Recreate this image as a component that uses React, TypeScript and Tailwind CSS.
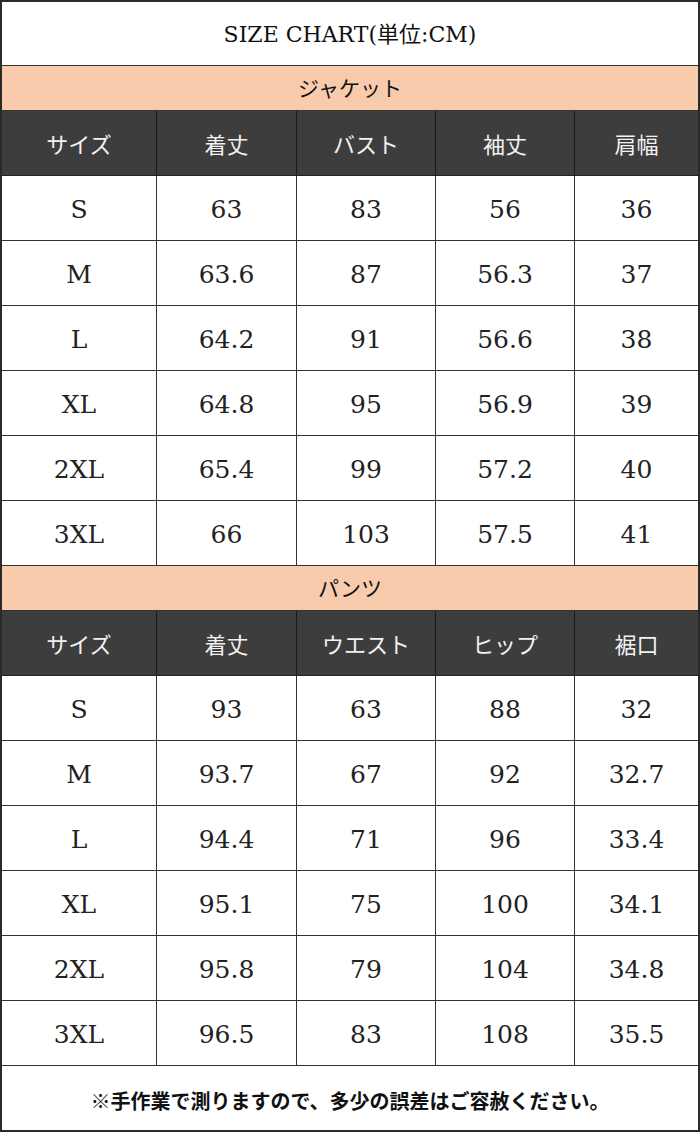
import React from "react";

// --- Size data ---
const jacketHead = ["サイズ", "着丈", "バスト", "袖丈", "肩幅"];
const jacketRows = [
  ["S", "63", "83", "56", "36"],
  ["M", "63.6", "87", "56.3", "37"],
  ["L", "64.2", "91", "56.6", "38"],
  ["XL", "64.8", "95", "56.9", "39"],
  ["2XL", "65.4", "99", "57.2", "40"],
  ["3XL", "66", "103", "57.5", "41"],
];

const pantsHead = ["サイズ", "着丈", "ウエスト", "ヒップ", "裾口"];
const pantsRows = [
  ["S", "93", "63", "88", "32"],
  ["M", "93.7", "67", "92", "32.7"],
  ["L", "94.4", "71", "96", "33.4"],
  ["XL", "95.1", "75", "100", "34.1"],
  ["2XL", "95.8", "79", "104", "34.8"],
  ["3XL", "96.5", "83", "108", "35.5"],
];

const cols = "grid grid-cols-[154px_140px_139px_139px_1fr]";
const jp = "font-['Noto_Sans_CJK_JP',sans-serif]";
const serif = "font-['DejaVu_Serif','Noto_Sans_CJK_JP',serif]";

const HeadRow: React.FC<{ cells: string[] }> = ({ cells }) => (
  <div className={`${cols} h-[65px] bg-[#3d3d3d] border-b border-[#222]`}>
    {cells.map((c, i) => (
      <div
        key={i}
        className={`flex items-center justify-center text-[22px] text-[#f2f2f2] ${jp} ${
          i > 0 ? "border-l border-[#1a1a1a]" : ""
        }`}
      >
        {c}
      </div>
    ))}
  </div>
);

const DataRow: React.FC<{ cells: string[] }> = ({ cells }) => (
  <div className={`${cols} h-[65px] bg-white border-b border-[#333]`}>
    {cells.map((c, i) => (
      <div
        key={i}
        className={`flex items-center justify-center pt-[4px] text-[25px] text-[#222] ${serif} ${
          i > 0 ? "border-l border-[#333]" : ""
        }`}
      >
        {c}
      </div>
    ))}
  </div>
);

const Section: React.FC<{ title: string; head: string[]; rows: string[][] }> = ({
  title,
  head,
  rows,
}) => (
  <>
    <div
      className={`h-[45px] bg-[#f8cbad] border-b border-[#333] flex items-center justify-center text-[21px] text-[#111] ${jp}`}
    >
      {title}
    </div>
    <HeadRow cells={head} />
    {rows.map((r, i) => (
      <DataRow key={i} cells={r} />
    ))}
  </>
);

const App: React.FC = () => {
  return (
    <div className="w-[700px] h-[1134px] bg-white">
      <div className="w-[700px] border-2 border-[#2a2a2a] flex flex-col">
        <div
          className={`h-[64px] pt-[2px] border-b border-[#333] flex items-center justify-center text-[22px] text-[#111] ${serif}`}
        >
          SIZE CHART(単位:CM)
        </div>
        <Section title="ジャケット" head={jacketHead} rows={jacketRows} />
        <Section title="パンツ" head={pantsHead} rows={pantsRows} />
        <div
          className={`h-[64px] pt-[6px] flex items-center justify-center text-[20px] font-bold text-[#111] ${jp}`}
        >
          ※手作業で測りますので、多少の誤差はご容赦ください。
        </div>
      </div>
    </div>
  );
};

export default App;
